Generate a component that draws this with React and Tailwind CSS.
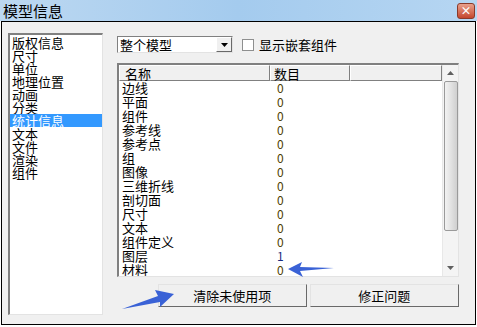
import React from "react";

const font = { fontFamily: '"Noto Sans CJK SC", "Noto Sans", sans-serif' };

const categories = ["版权信息", "尺寸", "单位", "地理位置", "动画", "分类", "统计信息", "文本", "文件", "渲染", "组件"];

const rows = [
  ["边线", "0"],
  ["平面", "0"],
  ["组件", "0"],
  ["参考线", "0"],
  ["参考点", "0"],
  ["组", "0"],
  ["图像", "0"],
  ["三维折线", "0"],
  ["剖切面", "0"],
  ["尺寸", "0"],
  ["文本", "0"],
  ["组件定义", "0"],
  ["图层", "1"],
  ["材料", "0"],
];

const App = () => {
  return (
    <div className="relative w-[477px] h-[327px] bg-white text-black overflow-hidden flex flex-col" style={font}>
      {/* title bar */}
      <div className="h-[21px] flex items-center justify-between pl-[3px] pr-[2px] bg-gradient-to-r from-[#bcd8f1] via-[#a4cbee] to-[#b6d6f2]">
        <span className="text-[15px] leading-none">模型信息</span>
        <div className="w-[18px] h-[16px] rounded-[3px] border border-[#8a3a2a] bg-gradient-to-b from-[#e8a08c] to-[#c4452c] flex items-center justify-center text-white text-[11px] font-bold leading-none">
          ×
        </div>
      </div>

      {/* body */}
      <div className="flex-1 ml-[1px] mr-[1px] mb-[2px] border border-black bg-[#f0f0f0] flex pt-[11px] pl-[6px]">
        {/* category list */}
        <div className="w-[95px] h-[282px] bg-white border-l-2 border-t-2 border-[#808080] border-r border-b border-r-[#e3e3e3] border-b-[#e3e3e3] pt-[1px] flex flex-col text-[13px] leading-[13px]">
          {categories.map((c) => (
            <div
              key={c}
              className={`h-[13px] pl-[2px] whitespace-nowrap ${c === "统计信息" ? "bg-[#3399ff] text-white" : ""}`}
            >
              {c}
            </div>
          ))}
        </div>

        {/* right panel */}
        <div className="ml-[14px] w-[342px] flex flex-col">
          <div className="flex items-center h-[17px] mt-[3px]">
            <div className="w-[116px] h-[17px] bg-white border border-t-[#808080] border-l-[#808080] border-r-[#e3e3e3] border-b-[#e3e3e3] flex items-center">
              <span className="flex-1 pl-[2px] text-[13px] leading-none">整个模型</span>
              <div className="w-[16px] h-[15px] bg-[#f0f0f0] border border-t-white border-l-white border-r-[#696969] border-b-[#696969] flex items-center justify-center">
                <svg width="7" height="4" viewBox="0 0 7 4"><path d="M0 0h7L3.5 4z" fill="#000" /></svg>
              </div>
            </div>
            <div className="ml-[9px] w-[12px] h-[12px] bg-white border border-[#8e8f8f]" />
            <span className="ml-[5px] text-[13px] leading-none">显示嵌套组件</span>
          </div>

          {/* table */}
          <div className="mt-[10px] h-[214px] bg-white border-l-2 border-t-2 border-[#808080] border-r border-b border-r-[#e3e3e3] border-b-[#e3e3e3] flex">
            <div className="flex-1 flex flex-col overflow-hidden">
              <div className="h-[16px] shrink-0 flex text-[13px] leading-none">
                <div className="w-[151px] bg-[#f0f0f0] border border-t-white border-l-white border-r-[#808080] border-b-[#808080] pl-[5px] flex items-center">名称</div>
                <div className="w-[80px] bg-[#f0f0f0] border border-t-white border-l-white border-r-[#808080] border-b-[#808080] pl-[3px] flex items-center">数目</div>
                <div className="flex-1 bg-[#f0f0f0] border border-t-white border-l-white border-r-[#808080] border-b-[#808080]" />
              </div>
              <div className="flex flex-col text-[13px] leading-[14px]">
                {rows.map(([n, v], i) => (
                  <div key={i} className="h-[14px] shrink-0 flex">
                    <span className="w-[151px] pl-[3px] whitespace-nowrap">{n}</span>
                    <span className={`pl-[7px] text-[12px] ${v === "1" ? "text-[#1a2a80]" : "text-[#4d3d00]"}`}>{v}</span>
                  </div>
                ))}
              </div>
            </div>
            {/* scrollbar */}
            <div className="w-[16px] bg-[#f4f4f4] flex flex-col items-center border-l border-[#e8e8e8]">
              <div className="h-[16px] flex items-center justify-center">
                <svg width="7" height="4" viewBox="0 0 7 4"><path d="M3.5 0L7 4H0z" fill="#606060" /></svg>
              </div>
              <div className="w-[14px] h-[150px] rounded-[2px] border border-[#9a9a9a] bg-gradient-to-r from-[#f2f2f2] via-[#e2e2e2] to-[#cfcfcf]" />
              <div className="flex-1" />
              <div className="h-[16px] flex items-center justify-center">
                <svg width="7" height="4" viewBox="0 0 7 4"><path d="M0 0h7L3.5 4z" fill="#606060" /></svg>
              </div>
            </div>
          </div>

          {/* buttons */}
          <div className="mt-[7px] flex gap-[3px] pl-[41px]">
            <button className="w-[149px] h-[23px] bg-[#f0f0f0] border border-t-[#e3e3e3] border-l-[#e3e3e3] border-r-[#696969] border-b-[#696969] text-[13px] leading-none">
              清除未使用项
            </button>
            <button className="w-[150px] h-[23px] bg-[#f0f0f0] border border-t-[#e3e3e3] border-l-[#e3e3e3] border-r-[#696969] border-b-[#696969] text-[13px] leading-none">
              修正问题
            </button>
          </div>
        </div>
      </div>

      {/* annotation arrows */}
      <svg className="absolute inset-0 pointer-events-none" width="477" height="327" viewBox="0 0 477 327">
        <path d="M288 269 L302 262 L300 267 L334 268 L300 271 L303 277 Z" fill="#3a62d6" />
        <path d="M174 294 L155 290 L158 296 L122 309 L160 302 L160 307 Z" fill="#3a62d6" />
      </svg>
    </div>
  );
};

export default App;
